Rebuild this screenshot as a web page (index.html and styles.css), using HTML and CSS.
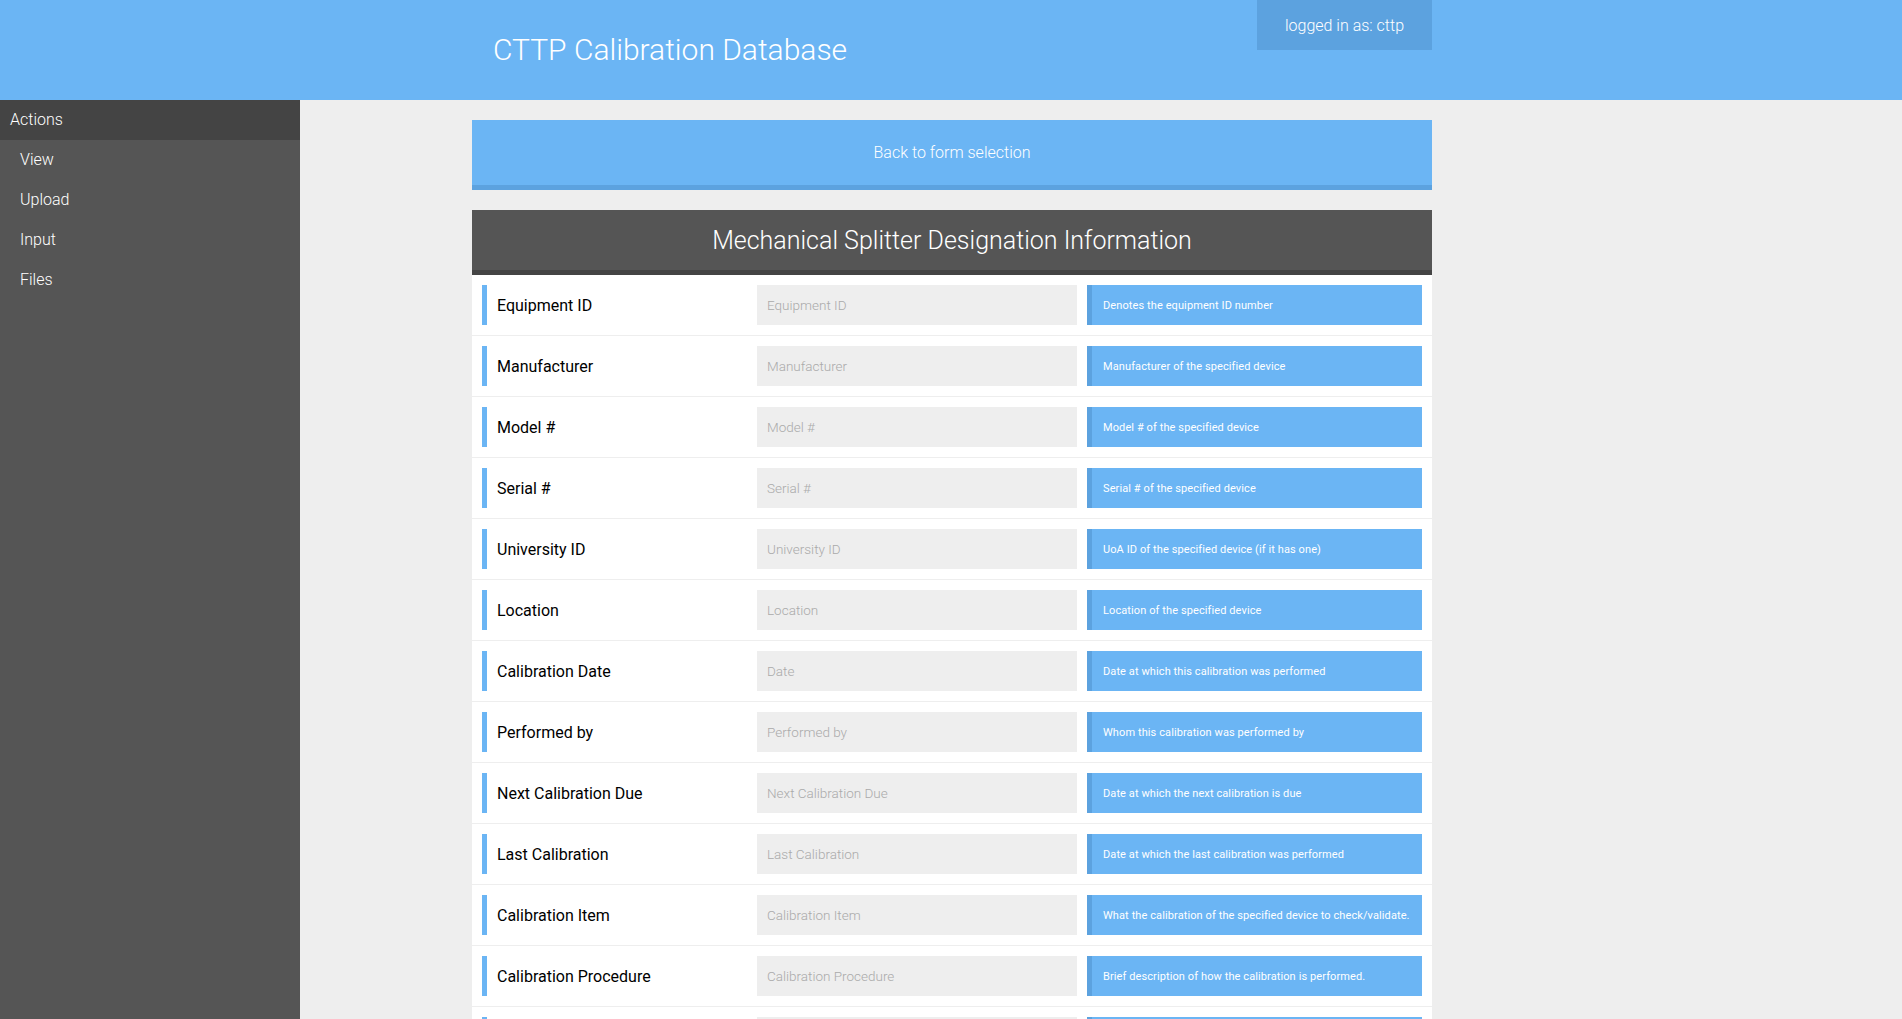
FILE: index.html
```html
<!DOCTYPE html>
<html lang="en">
<head>
<meta charset="utf-8">
<title>CTTP Calibration Database</title>
<link rel="stylesheet" href="styles.css">
</head>
<body>
<header class="topbar">
  <div class="topbar-inner">
    <h1 class="site-title">CTTP Calibration Database</h1>
    <div class="login">logged in as: cttp</div>
  </div>
</header>
<div class="layout">
  <nav class="sidebar">
    <div class="sidebar-head">Actions</div>
    <a class="sidebar-item" href="#">View</a>
    <a class="sidebar-item" href="#">Upload</a>
    <a class="sidebar-item" href="#">Input</a>
    <a class="sidebar-item" href="#">Files</a>
  </nav>
  <main class="content">
    <a class="back-btn" href="#">Back to form selection</a>
    <section class="form-card">
      <h2 class="form-title">Mechanical Splitter Designation Information</h2>
      <div class="rows">
        <div class="row"><label class="row-label">Equipment ID</label><input class="row-input" placeholder="Equipment ID"><div class="row-desc">Denotes the equipment ID number</div></div>
        <div class="row"><label class="row-label">Manufacturer</label><input class="row-input" placeholder="Manufacturer"><div class="row-desc">Manufacturer of the specified device</div></div>
        <div class="row"><label class="row-label">Model #</label><input class="row-input" placeholder="Model #"><div class="row-desc">Model # of the specified device</div></div>
        <div class="row"><label class="row-label">Serial #</label><input class="row-input" placeholder="Serial #"><div class="row-desc">Serial # of the specified device</div></div>
        <div class="row"><label class="row-label">University ID</label><input class="row-input" placeholder="University ID"><div class="row-desc">UoA ID of the specified device (if it has one)</div></div>
        <div class="row"><label class="row-label">Location</label><input class="row-input" placeholder="Location"><div class="row-desc">Location of the specified device</div></div>
        <div class="row"><label class="row-label">Calibration Date</label><input class="row-input" placeholder="Date"><div class="row-desc">Date at which this calibration was performed</div></div>
        <div class="row"><label class="row-label">Performed by</label><input class="row-input" placeholder="Performed by"><div class="row-desc">Whom this calibration was performed by</div></div>
        <div class="row"><label class="row-label">Next Calibration Due</label><input class="row-input" placeholder="Next Calibration Due"><div class="row-desc">Date at which the next calibration is due</div></div>
        <div class="row"><label class="row-label">Last Calibration</label><input class="row-input" placeholder="Last Calibration"><div class="row-desc">Date at which the last calibration was performed</div></div>
        <div class="row"><label class="row-label">Calibration Item</label><input class="row-input" placeholder="Calibration Item"><div class="row-desc">What the calibration of the specified device to check/validate.</div></div>
        <div class="row"><label class="row-label">Calibration Procedure</label><input class="row-input" placeholder="Calibration Procedure"><div class="row-desc">Brief description of how the calibration is performed.</div></div>
        <div class="row"><label class="row-label">Calibration Result</label><input class="row-input" placeholder="Calibration Result"><div class="row-desc">Result of the calibration.</div></div>
      </div>
    </section>
  </main>
</div>
</body>
</html>
```

FILE: styles.css
```css
* { box-sizing: border-box; }
html, body { margin: 0; padding: 0; }
body {
  background: #eeeeee;
  font-family: Roboto, "Liberation Sans", Arial, sans-serif;
  color: #000;
}
.topbar {
  background: #6bb5f4;
  height: 100px;
}
.topbar-inner {
  width: 960px;
  margin-left: 472px;
  height: 100px;
  display: flex;
  justify-content: space-between;
  align-items: flex-start;
}
.site-title {
  margin: 0;
  padding-left: 21px;
  line-height: 100px;
  font-size: 30px;
  font-weight: 300;
  color: #fff;
}
.login {
  background: #5ca2df;
  color: #fff;
  height: 50px;
  width: 175px;
  display: flex;
  align-items: center;
  justify-content: center;
  font-size: 16px;
  font-weight: 300;
}
.layout {
  display: grid;
  grid-template-columns: 300px 1fr;
}
.sidebar {
  background: #555555;
  display: flex;
  flex-direction: column;
}
.sidebar-head {
  background: #444444;
  color: #fff;
  height: 40px;
  line-height: 40px;
  padding-left: 10px;
  font-size: 16px;
  font-weight: 300;
}
.sidebar-item {
  color: #fff;
  text-decoration: none;
  height: 40px;
  line-height: 40px;
  padding-left: 20px;
  font-size: 16px;
  font-weight: 300;
}
.content {
  width: 960px;
  margin-left: 172px;
  padding-top: 20px;
}
.back-btn {
  display: flex;
  align-items: center;
  justify-content: center;
  height: 70px;
  background: #6bb5f4;
  border-bottom: 5px solid #5ca2df;
  color: #fff;
  text-decoration: none;
  font-size: 16px;
  font-weight: 300;
}
.form-card {
  margin-top: 20px;
  background: #fff;
}
.form-title {
  margin: 0;
  height: 65px;
  background: #555555;
  border-bottom: 5px solid #444444;
  color: #fff;
  font-size: 25px;
  font-weight: 300;
  display: flex;
  align-items: center;
  justify-content: center;
}
.row {
  display: grid;
  grid-template-columns: 275px 320px 1fr;
  column-gap: 0;
  padding: 10px;
  border-bottom: 1px solid #eeeeee;
}
.row-label {
  height: 40px;
  border-left: 5px solid #6bb5f4;
  padding-left: 10px;
  display: flex;
  align-items: center;
  font-size: 16px;
}
.row-input {
  height: 40px;
  border: none;
  outline: none;
  background: #eeeeee;
  padding: 0 10px;
  font-family: Roboto, "Liberation Sans", Arial, sans-serif;
  font-size: 13.5px;
  font-weight: 300;
  color: #333;
}
.row-input::placeholder { color: #aaaaaa; }
.row-desc {
  margin-left: 10px;
  height: 40px;
  background: #6bb5f4;
  border-left: 5px solid #5ca2df;
  padding-left: 11px;
  display: flex;
  align-items: center;
  color: #fff;
  font-size: 11px;
  letter-spacing: 0.1px;
}
```
